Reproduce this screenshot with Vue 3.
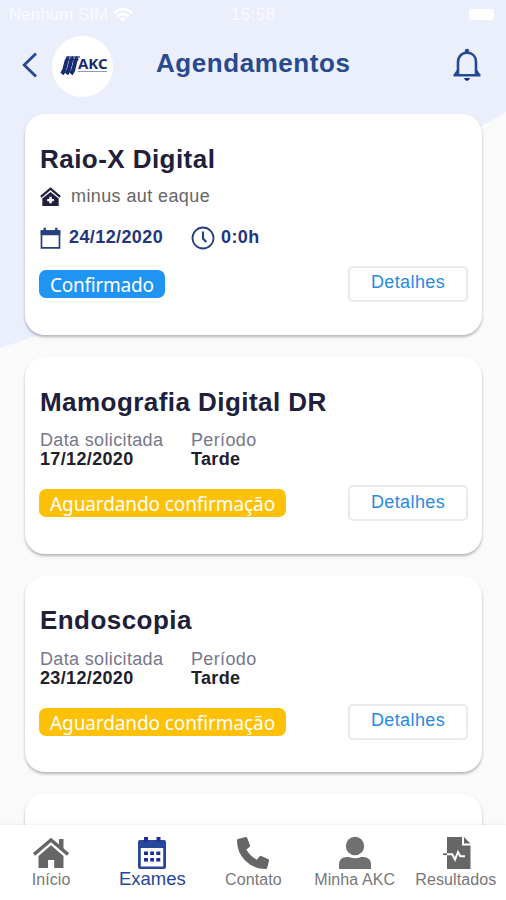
<script setup>
const exams = [
  { title: 'Raio-X Digital', place: 'minus aut eaque', date: '24/12/2020', hour: '0:0h', status: 'Confirmado', confirmed: true },
  { title: 'Mamografia Digital DR', date: '17/12/2020', period: 'Tarde', status: 'Aguardando confirmação' },
  { title: 'Endoscopia', date: '23/12/2020', period: 'Tarde', status: 'Aguardando confirmação' }
]
</script>

<template>
  <div class="screen">
    <svg class="backdrop" viewBox="0 0 506 900" aria-hidden="true">
      <path d="M0 0H506V112L480 127C430 160 440 310 300 325C180 330 80 322 30 338L0 348Z" fill="#ebeffc" />
    </svg>

    <div class="statusbar">
      <span class="carrier">Nenhum SIM</span>
      <svg class="wifi" viewBox="0 0 20 14">
        <g fill="none" stroke="#fff" stroke-width="2.6">
          <path d="M1 5Q10-2.6 19 5" /><path d="M4.3 8.6Q10 3.8 15.7 8.6" />
        </g>
        <path d="M6.8 10.7Q10 8.2 13.2 10.7L10 14Z" fill="#fff" />
      </svg>
      <span class="time">15:58</span>
      <span class="battery"></span>
    </div>

    <header class="header">
      <svg class="back" viewBox="0 0 16 26"><path d="M14 1.5L2.2 13L14 24.5" fill="none" stroke="#254a91" stroke-width="2.8" /></svg>
      <div class="logo">
        <svg class="bars" viewBox="0 0 20 19">
          <g fill="none" stroke="#172b70" stroke-width="4">
            <path d="M2 18Q4.500 15 5.500 9T9 1.800" /><path d="M6.500 18Q9 15 10 9T13.500 1.800" /><path d="M11 18Q13.500 15 14.500 9T17.800 1.800" />
          </g>
          <path d="M6.500 1H20" stroke="#172b70" stroke-width="1.200" />
        </svg>
        <div class="brand"><b>AKC</b><i></i></div>
      </div>
      <h1>Agendamentos</h1>
      <svg class="bell" viewBox="0 0 28 34">
        <g fill="none" stroke="#254a91" stroke-width="2.600">
          <path d="M5 26V14.500C5 8.500 8.700 4.800 14 4.800S23 8.500 23 14.500V26" />
          <path d="M.5 27.200H27.500M5 22.500L2 27M23 22.500L26 27" />
        </g>
        <circle cx="14" cy="3" r="2.300" fill="#254a91" />
        <path d="M11 30H17Q16 33 14 33T11 30" fill="#172b85" />
      </svg>
    </header>

    <main class="list">
      <article v-for="e in exams" :key="e.title" class="card" :class="{ first: e.confirmed }">
        <h2>{{ e.title }}</h2>
        <template v-if="e.confirmed">
          <div class="place">
            <svg viewBox="0 0 20 18">
              <path d="M.8 9.300L10 1.500L19.200 9.300" fill="none" stroke="#20203c" stroke-width="2.100" />
              <path fill-rule="evenodd" fill="#20203c" d="M10 4.800L17.800 11V18H2.200V11ZM8.800 9.200V11.300H6.800V13.500H8.800V15.500H11.200V13.500H13.200V11.300H11.200V9.200Z" />
            </svg>
            <span>{{ e.place }}</span>
          </div>
          <div class="when">
            <svg class="cal" viewBox="0 0 20 22">
              <path d="M1 4H19V20.800H1Z" fill="none" stroke="#25427e" stroke-width="1.700" />
              <path d="M.2 3.200H19.800V8.200H.2ZM3 .7H5.400V4H3ZM14.600 .7H17V4H14.600Z" fill="#25427e" />
            </svg>
            <span class="day">{{ e.date }}</span>
            <svg class="clock" viewBox="0 0 24 24">
              <g fill="none" stroke="#25427e" stroke-width="1.800"><circle cx="12" cy="12" r="10.500" /><path d="M12 5.500V12.500L15.300 16" stroke-width="2.100" /></g>
            </svg>
            <span>{{ e.hour }}</span>
          </div>
        </template>
        <dl v-else class="facts">
          <div><dt>Data solicitada</dt><dd>{{ e.date }}</dd></div>
          <div><dt>Período</dt><dd>{{ e.period }}</dd></div>
        </dl>
        <div class="actions">
          <span class="badge">{{ e.status }}</span>
          <button>Detalhes</button>
        </div>
      </article>
      <article class="card"></article>
    </main>

    <nav class="tabs">
      <a class="t-home">
        <svg viewBox="0 0 36 32">
          <path d="M1 17.500L18 3L35 17.500" fill="none" stroke="#666" stroke-width="3.400" />
          <path d="M26 2H30.500V14L26 10Z" fill="#666" />
          <path d="M18 8.300L30.500 19V31H21.200V23H15V31H5.500V19Z" fill="#666" />
        </svg>
        <span>Início</span>
      </a>
      <a class="t-exams active">
        <svg viewBox="0 0 30 34">
          <path d="M3 4H27Q29 4 29 6V31Q29 33 27 33H3Q1 33 1 31V6Q1 4 3 4ZM3.800 12V30.500H26.200V12Z" fill="#25469b" fill-rule="evenodd" />
          <path d="M7 1H11V6H7ZM19.500 1H23.500V6H19.500ZM7 15.500H11V19H7ZM13.200 15.500H17V19H13.200ZM19.300 15.500H23.300V19H19.300ZM7 22H11V25.500H7ZM13.200 22H17V25.500H13.200ZM19.300 22H23.300V25.500H19.300Z" fill="#202f99" />
        </svg>
        <span>Exames</span>
      </a>
      <a class="t-phone">
        <svg viewBox="0 0 34 34"><path d="M2 3L9.500 1Q10.700 .8 11.200 2L14 9.200Q14.300 10.300 13.500 11L10.400 13.600Q13.800 20 20.800 23.700L23.500 20.400Q24.200 19.600 25.200 20L32 23Q33.200 23.500 33 24.800L31.300 31.500Q31 33 29.500 33Q17.500 33 9.300 24.800Q1 16.500 1 4.500Q1 3.300 2 3Z" fill="#666" /></svg>
        <span>Contato</span>
      </a>
      <a class="t-user">
        <svg viewBox="0 0 34 34"><circle cx="17" cy="10" r="9.200" fill="#707070" /><path d="M1 33V29Q1 21 9 21H11Q17 23.500 23 21H25Q33 21 33 29V33Q33 33 31.500 33H2.500Q1 33 1 33Z" fill="#707070" /></svg>
        <span>Minha AKC</span>
      </a>
      <a class="t-results">
        <svg viewBox="0 0 30 34">
          <path d="M5 1H20V9.500H28.500V33H5ZM22 1L28.500 7.500H22Z" fill="#666" />
          <path d="M4 18.200H10.200L13 23.500L16 16L18.300 20.200H23" fill="none" stroke="#fff" stroke-width="2" />
          <path d="M1 18.200H5" stroke="#666" stroke-width="1.800" />
        </svg>
        <span>Resultados</span>
      </a>
    </nav>
  </div>
</template>

<style>
body { margin: 0; overflow: hidden; }
</style>

<style scoped>
* { box-sizing: border-box; }
.screen { position: relative; height: 900px; width: 506px; overflow: hidden; background: #fafafa; font-family: "Liberation Sans", sans-serif; display: flex; flex-direction: column; }
.backdrop { position: absolute; inset: 0; width: 506px; height: 900px; }
.statusbar { position: relative; flex: none; height: 29px; display: flex; align-items: center; padding-left: 9px; color: #fafbff; font-size: 17px; letter-spacing: 0; }
.carrier { width: 98px; white-space: nowrap; }
.wifi { width: 20px; height: 14px; margin-left: 6px; }
.time { margin-left: 98px; letter-spacing: .4px; }
.battery { margin-left: auto; margin-right: 12px; width: 25px; height: 11px; border-radius: 3px; background: #fff; }
.header { position: relative; flex: none; height: 85px; display: flex; align-items: flex-start; padding: 7px 25px 0 22px; }
.back { width: 16px; height: 26px; margin-top: 16px; }
.logo { width: 61px; height: 61px; margin-left: 14px; border-radius: 50%; background: #fff; display: flex; align-items: center; padding-left: 8px; }
.bars { width: 20px; height: 19px; margin-bottom: 2px; }
.brand { color: #172b70; width: 28px; margin: 0 0 5px -2px; }
.brand b { display: block; font: 700 15px/14px "Open Sans", sans-serif; letter-spacing: -.2px; }
.brand i { display: block; height: 1px; margin: 1px -1px 0 0; background: #9199b8; }
h1 { margin: 11px 0 0 43px; color: #294a8e; font-size: 26px; line-height: 32px; letter-spacing: .55px; }
.bell { width: 28px; height: 34px; margin-left: auto; margin-top: 12px; }
.list { position: relative; flex: none; display: flex; flex-direction: column; gap: 22px; padding: 0 24px 0 25px; }
.card { height: 196.5px; background: #fff; border-radius: 20px; padding: 28.500px 14px 0 15px; box-shadow: 0 2px 3px rgba(0,0,0,.28); }
.card.first { height: 221px; }
h2 { margin: 0; color: #20203a; font-size: 26px; line-height: 32px; letter-spacing: .45px; }
.place { display: flex; align-items: center; height: 24px; margin-top: 10px; color: #666; font-size: 18px; letter-spacing: .4px; }
.place svg { width: 21px; height: 19px; margin-right: 10px; }
.when { display: flex; align-items: center; height: 24px; margin-top: 17px; color: #23357e; font-size: 18px; font-weight: 700; letter-spacing: .4px; }
.cal { width: 21px; height: 22px; margin-right: 8px; }
.day { width: 122px; }
.clock { width: 24px; height: 24px; margin-right: 6px; }
.facts { display: flex; margin: 13.500px 0 0; height: 38px; font-size: 18px; line-height: 19px; letter-spacing: .35px; }
.facts div { width: 151px; white-space: nowrap; }
dt { color: #77778c; }
dd { margin: 0; color: #20202c; font-weight: 700; }
.actions { display: flex; align-items: center; justify-content: space-between; margin-top: 16px; margin-left: -1px; }
.badge { height: 28px; padding: 0 11px; border-radius: 7px; background: #ffc107; color: #fff; font: 19px/30px "Noto Sans", sans-serif; letter-spacing: -.1px; white-space: nowrap; }
.card.first .badge { background: #2094f3; letter-spacing: -.25px; }
button { width: 120px; height: 36px; padding: 0 0 2px; border: 2px solid #e9e9e9; border-radius: 5px; background: #fff; color: #268be4; font: 18px "Liberation Sans", sans-serif; letter-spacing: .4px; }
.tabs { position: absolute; left: 0; right: 0; bottom: 0; height: 75px; background: #fff; box-shadow: 0 -1px 2px rgba(0,0,0,.06); display: grid; grid-template-columns: repeat(5, 1fr); }
.tabs a { display: flex; flex-direction: column; align-items: center; color: #777; font-size: 16px; line-height: 20px; letter-spacing: .1px; padding: 11px 0 0 1px; white-space: nowrap; }
.tabs svg { width: 34px; height: 34px; }
.tabs .t-home svg { width: 36px; }
.tabs .t-results svg { margin-left: 2px; }
.tabs .active { color: #25469b; font-size: 18.500px; letter-spacing: 0; line-height: 18px; }
</style>
